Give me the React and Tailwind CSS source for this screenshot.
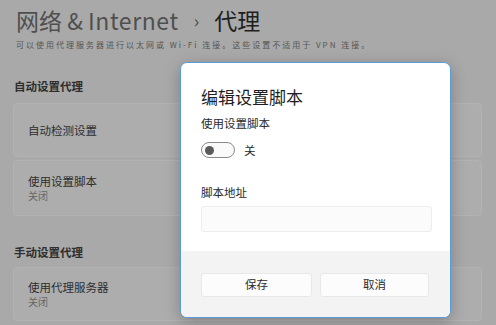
import React from "react";

function Card({ title, sub, className = "" }) {
  return (
    <div className={`flex flex-col justify-center rounded-[4px] border border-[#b3b3b3] bg-[#adadad] pl-[14px] ${className}`}>
      <div className="text-[11.5px] leading-[15px] text-[#2e2e2e]">{title}</div>
      {sub && <div className="text-[10px] leading-[13px] text-[#666]">{sub}</div>}
    </div>
  );
}

export default function App() {
  return (
    <div className="relative h-[325px] w-[496px] overflow-hidden bg-[#a9a9a9] font-['Noto_Sans_CJK_SC','Noto_Sans',sans-serif]">
      <div className="flex flex-col pl-[13px] pr-[14px]">
        <h1 className="mt-[5px] flex items-center pl-[3px] text-[23px] leading-[30px] whitespace-nowrap">
          <span className="text-[#4f4f4f]">网络 &amp; <span className="tracking-[0.6px]">Internet</span></span>
          <span className="mx-[15px] text-[18px] text-[#4f4f4f]">›</span>
          <span className="text-[#1f1f1f]">代理</span>
        </h1>
        <p className="mt-[5px] pl-[3px] text-[8px] leading-[10px] tracking-[2px] whitespace-nowrap text-[#555]">
          可以使用代理服务器进行以太网或 Wi-Fi 连接。这些设置不适用于 VPN 连接。
        </p>
        <h2 className="mt-[29px] pl-[1px] text-[11.5px] font-bold leading-[14px] text-[#2e2e2e]">自动设置代理</h2>
        <Card title="自动检测设置" className="mt-[10px] h-[54px]" />
        <Card title="使用设置脚本" sub="关闭" className="mt-[3px] h-[56px]" />
        <h2 className="mt-[29px] pl-[1px] text-[11.5px] font-bold leading-[14px] text-[#2e2e2e]">手动设置代理</h2>
        <Card title="使用代理服务器" sub="关闭" className="mt-[8px] h-[54px]" />
      </div>

      <div className="absolute left-[180px] top-[62px] flex h-[256px] w-[271px] flex-col overflow-hidden rounded-[7px] border-[1.5px] border-[#5b9bd5] bg-white shadow-[0_4px_16px_rgba(0,0,0,0.25)]">
        <div className="flex h-[188px] flex-col px-[20px] pt-[23px]">
          <div className="text-[17px] leading-[22px] text-[#1f1f1f]">编辑设置脚本</div>
          <div className="mt-[8px] text-[11.5px] leading-[14px] text-[#2a2a2a]">使用设置脚本</div>
          <div className="mt-[12px] flex items-center">
            <div className="flex h-[16px] w-[34px] items-center rounded-full border border-[#8a8a8a] bg-[#fafafa] px-[3px]">
              <div className="h-[9px] w-[9px] rounded-full bg-[#5a5a5a]" />
            </div>
            <span className="ml-[9px] text-[11.5px] leading-[14px] text-[#2a2a2a]">关</span>
          </div>
          <div className="mt-[27px] text-[11.5px] leading-[14px] text-[#2a2a2a]">脚本地址</div>
          <div className="mt-[7px] h-[26px] w-[231px] rounded-[3px] border border-[#ededed] bg-[#fbfbfb]" />
        </div>
        <div className="flex flex-1 gap-[8px] bg-[#f3f3f3] px-[20px] pt-[22px]">
          <button className="flex h-[24px] w-[111px] items-center justify-center rounded-[3px] border border-[#e8e8e8] bg-[#fcfcfc] text-[11.5px] text-[#2a2a2a]">保存</button>
          <button className="flex h-[24px] w-[109px] items-center justify-center rounded-[3px] border border-[#e8e8e8] bg-[#fcfcfc] text-[11.5px] text-[#2a2a2a]">取消</button>
        </div>
      </div>
    </div>
  );
}
